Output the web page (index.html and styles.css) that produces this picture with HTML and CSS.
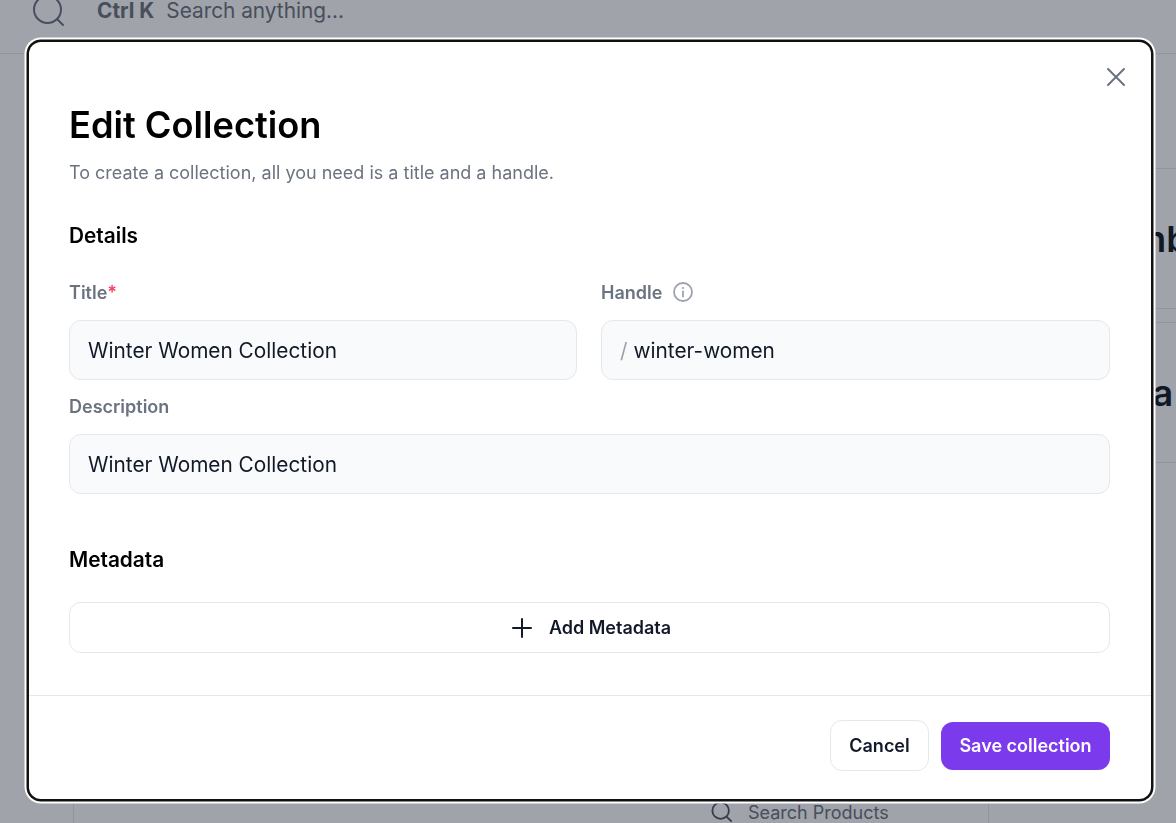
FILE: index.html
```html
<!DOCTYPE html>
<html lang="en">
<head>
<meta charset="utf-8">
<title>Edit Collection</title>
<link rel="stylesheet" href="styles.css">
</head>
<body>
<div class="page">
  <header class="topbar">
    <div class="topbar-row">
      <svg class="search-lg" viewBox="0 0 32 32" fill="none" stroke="currentColor" stroke-width="2" stroke-linecap="round"><circle cx="14.5" cy="14.5" r="13.5"/><path d="M24.5 24.5 30 30"/></svg>
      <span class="kbd">Ctrl K</span>
      <span class="search-hint">Search anything...</span>
    </div>
  </header>
  <div class="shell">
    <div class="rail"></div>
    <main class="main">
      <div class="table-search">
        <svg class="search-sm" viewBox="0 0 24 24" fill="none" stroke="currentColor" stroke-width="2" stroke-linecap="round"><circle cx="10.5" cy="10.5" r="9"/><path d="M17.5 17.5 22 22"/></svg>
        <span>Search Products</span>
      </div>
    </main>
    <aside class="side">
      <section class="side-card"><h2>Thumbnail</h2></section>
      <section class="side-card"><h2>Media</h2></section>
    </aside>
  </div>
</div>

<div class="overlay"></div>

<div class="modal">
  <button class="close" aria-label="Close">
    <svg viewBox="0 0 20 20" fill="none" stroke="currentColor" stroke-width="2" stroke-linecap="round"><path d="M2 2l16 16M18 2 2 18"/></svg>
  </button>
  <div class="modal-body">
    <h1>Edit Collection</h1>
    <p class="sub">To create a collection, all you need is a title and a handle.</p>
    <h3 class="section-title">Details</h3>
    <div class="two-col">
      <div class="field">
        <div class="label"><span>Title<span class="req">*</span></span></div>
        <div class="input">Winter Women Collection</div>
      </div>
      <div class="field">
        <div class="label"><span>Handle</span>
          <svg class="info" viewBox="0 0 20 20" fill="none" stroke="currentColor" stroke-width="1.8" stroke-linecap="round"><circle cx="10" cy="10" r="9"/><path d="M10 9.5v5"/><path d="M10 6h.01" stroke-width="2.2"/></svg>
        </div>
        <div class="input"><span class="slash">/</span>winter-women</div>
      </div>
    </div>
    <div class="field desc">
      <div class="label">Description</div>
      <div class="input">Winter Women Collection</div>
    </div>
    <h3 class="section-title meta-title">Metadata</h3>
    <button class="add-meta">
      <svg viewBox="0 0 20 20" fill="none" stroke="currentColor" stroke-width="2" stroke-linecap="round"><path d="M10 1v18M1 10h18"/></svg>
      Add Metadata
    </button>
  </div>
  <footer class="modal-foot">
    <button class="btn btn-cancel">Cancel</button>
    <button class="btn btn-save">Save collection</button>
  </footer>
</div>
</body>
</html>
```
FILE: styles.css
```css
* { box-sizing: border-box; }
html, body { margin: 0; height: 100%; overflow: hidden; }
body {
  font-family: Inter, "Noto Sans", sans-serif;
  background: #fff;
  color: #111827;
}
button { font-family: inherit; }

.page { height: 823px; display: flex; flex-direction: column; overflow: hidden; }

.topbar { height: 54px; flex: none; border-bottom: 1px solid #e5e7eb; padding-left: 33px; }
.topbar-row { height: 21px; display: flex; align-items: center; color: #6b7280; font-size: 20.8px; }
.search-lg { width: 32px; height: 32px; flex: none; margin-right: 32px; }
.kbd { font-weight: 700; margin-right: 12px; }

.shell { flex: 1; display: flex; min-height: 0; }
.rail { width: 74px; flex: none; border-right: 1px solid #e5e7eb; }
.main { width: 915px; flex: none; border-right: 1px solid #e5e7eb; padding: 748px 0 0 637px; }
.table-search { display: flex; align-items: center; gap: 15px; color: #6b7280; font-size: 18px; height: 20px; }
.search-sm { width: 22px; height: 22px; flex: none; color: #4b5563; }

.side { flex: 1; padding: 114px 0 0 77px; display: flex; flex-direction: column; gap: 13px; min-width: 0; }
.side-card {
  height: 141px;
  margin-right: -200px;
  border-top: 1px solid #e5e7eb;
  border-bottom: 1px solid #e5e7eb;
  display: flex;
  align-items: center;
}
.side-card h2 { margin: 0; font-size: 36px; font-weight: 600; line-height: 1; white-space: nowrap; }

.overlay { position: fixed; inset: 0; background: rgba(17, 24, 39, .4); }

.modal {
  position: fixed;
  left: 29px;
  top: 42px;
  width: 1122px;
  height: 757px;
  background: #fff;
  border-radius: 12px;
  box-shadow: 0 0 0 2.5px #111, 0 0 0 4.5px #fff;
  display: flex;
  flex-direction: column;
}
.close {
  position: absolute;
  top: 25px;
  right: 25px;
  width: 20px;
  height: 20px;
  padding: 0;
  background: none;
  border: 0;
  color: #6b7280;
}
.close svg { display: block; width: 20px; height: 20px; }

.modal-body { flex: 1; padding: 58px 41px 0 40px; }
h1 { margin: 0; font-size: 36.2px; line-height: 50px; font-weight: 600; color: #000; }
.sub { margin: 10px 0 0; font-size: 18px; line-height: 26px; color: #6b7280; }
.section-title { margin: 0; font-size: 20.8px; line-height: 28px; font-weight: 600; color: #000; }
.sub + .section-title { margin-top: 36px; }
.two-col { display: grid; grid-template-columns: 508px 509px; gap: 24px; margin-top: 30px; }
.label {
  display: flex;
  align-items: center;
  height: 24px;
  font-size: 18px;
  font-weight: 600;
  color: #6b7280;
  margin-bottom: 16px;
}
.req { color: #f43f5e; }
.info { width: 20px; height: 20px; margin-left: 11px; color: #9ca3af; }
.input {
  height: 60px;
  display: flex;
  align-items: center;
  padding: 0 18px;
  background: #f9fafb;
  border: 1px solid #e5e7eb;
  border-radius: 12px;
  font-size: 20.8px;
  color: #111827;
}
.slash { color: #9ca3af; margin-right: 6px; }
.desc { margin-top: 14px; }
.desc .label { margin-bottom: 16px; }
.meta-title { margin-top: 52px; }
.add-meta {
  width: 100%;
  height: 51px;
  margin-top: 28px;
  padding: 0 0 0 4px;
  display: flex;
  align-items: center;
  justify-content: center;
  gap: 17px;
  background: #fff;
  border: 1px solid #e5e7eb;
  border-radius: 12px;
  font-size: 18px;
  line-height: 24px;
  font-weight: 600;
  color: #111827;
}
.add-meta svg { width: 20px; height: 20px; }

.modal-foot {
  height: 104px;
  flex: none;
  border-top: 1px solid #e5e7eb;
  display: flex;
  align-items: center;
  justify-content: flex-end;
  gap: 12px;
  padding: 0 41px 4px 0;
}
.btn { border-radius: 12px; font-size: 18px; font-weight: 600; padding: 0; }
.btn-cancel { width: 99px; height: 51px; background: #fff; border: 1px solid #e5e7eb; color: #111827; }
.btn-save { width: 169px; height: 48px; background: #7c3aed; border: 0; color: #fff; }
```
